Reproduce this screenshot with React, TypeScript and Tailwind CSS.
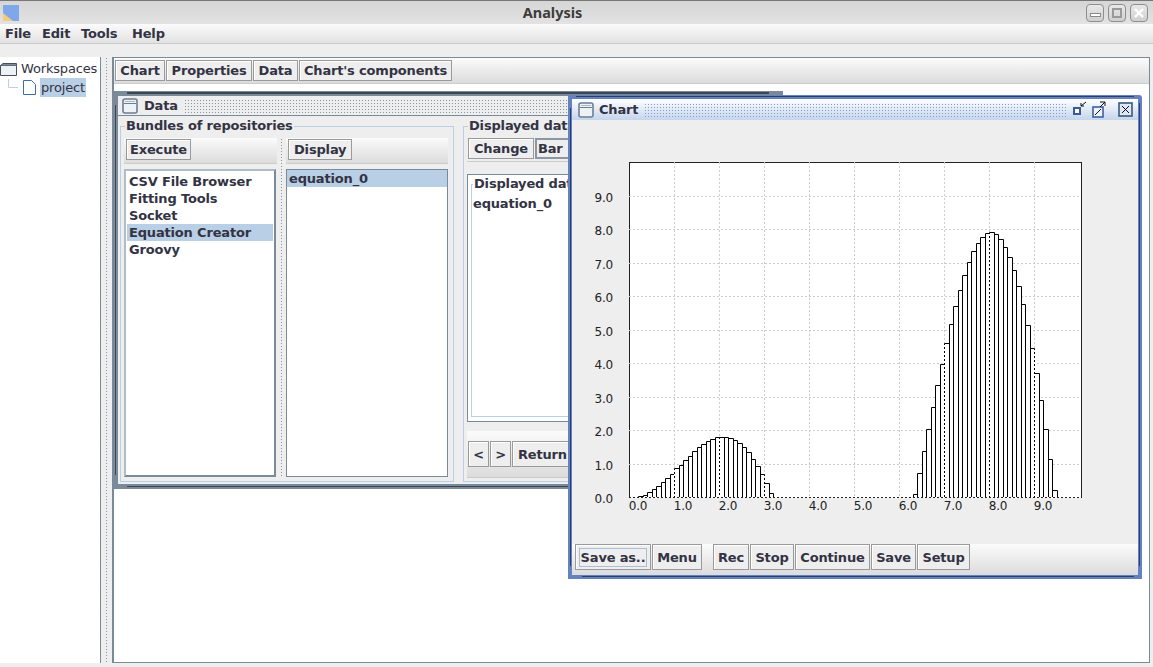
const LABEL = "font-['DejaVu_Sans',sans-serif] tracking-[-0.17px]";

const dots = "bg-[radial-gradient(circle,#8794a3_0.8px,transparent_1px)] bg-[length:3px_3px]";
const blueDots = "bg-[radial-gradient(circle,#7f9bd6_0.8px,transparent_1px)] bg-[length:3px_3px]";

// bar tops read off the picture, in px above the axis
const HUMP_A = [0, 0, 1, 2, 5, 8, 11, 15, 19, 23, 29, 32, 37, 41, 46, 50, 53, 56, 58, 60, 60, 60, 59, 57, 54, 50, 45, 38, 31, 23, 14, 4];
const HUMP_B = [3, 24, 46, 68, 90, 112, 133, 154, 173, 191, 207, 222, 235, 246, 254, 260, 264, 265, 263, 258, 250, 240, 227, 211, 193, 172, 149, 124, 97, 68, 38, 7];

const MENUS = [
  { label: "File", width: "w-[37px]" },
  { label: "Edit", width: "w-[39px]" },
  { label: "Tools", width: "w-[51px]" },
  { label: "Help", width: "w-[40px]" },
];

function Btn({ children, className = "" }: { children: React.ReactNode; className?: string }) {
  return (
    <button className={`h-[21px] px-[5px] border border-[#9a9a9a] shadow-[inset_1px_1px_0_#fff] bg-[#eeeeee] text-[13px] font-bold text-[#333344] leading-none whitespace-nowrap shrink-0 ${LABEL} ${className}`}>
      {children}
    </button>
  );
}

function WindowIcon() {
  return (
    <svg width="16" height="16" viewBox="0 0 16 16" className="shrink-0">
      <rect x="1" y="1" width="14" height="14" rx="2" fill="#eef2f7" stroke="#6b7f93" strokeWidth="1.6" />
      <path d="M2 5.5h12" stroke="#6b7f93" />
      <path d="M3.5 3.5h9" stroke="#6b7f93" strokeDasharray="1 1" />
    </svg>
  );
}

function Toolbar({ children, className = "" }: { children: React.ReactNode; className?: string }) {
  return (
    <div className={`flex bg-gradient-to-b from-[#fbfbfb] to-[#dcdcdc] border-b border-[#cccccc] ${className}`}>
      {children}
    </div>
  );
}

function Splitter({ className = "" }: { className?: string }) {
  return (
    <div className={`flex justify-center shrink-0 ${className}`}>
      <div className={`w-[3px] h-full ${dots}`} />
    </div>
  );
}

function Chart() {
  const W = 452;
  const H = 335;
  const xs = [0, 45, 90, 135, 180, 225, 270, 315, 360, 405];
  const ys = [1, 2, 3, 4, 5, 6, 7, 8, 9].map((v) => H - v * 33.45);
  const px = (k: number) => Math.round(k * 4.5);
  const bars = (list: number[], start: number) =>
    list
      .map((h, i) => `M${px(start + i) + 0.5} ${H}V${H - h + 0.5}H${px(start + i + 1) + 0.5}V${H}`)
      .join("");
  // the grid shows through the bar edges it shares a column with
  const height = (x: number) => {
    const k = Math.round(x / 4.5);
    const at = (n: number) => (n < 32 ? HUMP_A[n] ?? 0 : n >= 63 ? HUMP_B[n - 63] ?? 0 : 0);
    return Math.max(at(k - 1), at(k));
  };
  return (
    <svg width="520" height="360" viewBox="-55 -5 520 360" className="block">
      <rect x="0.5" y="0.5" width={W} height={H} fill="#fff" stroke="#222" />
      {xs.slice(1).map((x) => (
        <path key={x} d={`M${x + 0.5} 0V${H}`} stroke="#cccccc" strokeDasharray="2 2" />
      ))}
      {ys.map((y) => (
        <path key={y} d={`M0 ${Math.round(y) + 0.5}H${W}`} stroke="#cccccc" strokeDasharray="2 2" />
      ))}
      <path d={bars(HUMP_A, 0) + bars(HUMP_B, 63)} fill="#fff" stroke="#000" />
      {xs.slice(1).map((x) => (
        <path key={x} d={`M${x + 0.5} ${H - height(x)}V${H}`} stroke="#fff" strokeDasharray="2 2" strokeDashoffset="2" />
      ))}
      <path d={`M0 ${H + 0.5}H${W}`} stroke="#fff" />
      <path d={`M0 ${H + 0.5}H${W}`} stroke="#222" strokeDasharray="2 2" />
      {xs.map((x, i) => (
        <text key={x} x={x + 9} y={H + 13} fontSize="12" textAnchor="middle" fill="#222" fontFamily="DejaVu Sans">
          {i}.0
        </text>
      ))}
      {[0, 1, 2, 3, 4, 5, 6, 7, 8, 9].map((v) => (
        <text key={v} x={-16} y={H - v * 33.45 + 6} fontSize="12" textAnchor="end" fill="#222" fontFamily="DejaVu Sans">
          {v}.0
        </text>
      ))}
    </svg>
  );
}

function DataWindow() {
  return (
    <div className="absolute -left-[1px] top-[7px] w-[670px] h-[398px] border-[5px] border-[#7a8a99] bg-[#eeeeee] flex flex-col">
      <div className="absolute left-[9px] right-[9px] -top-[4px] h-[2px] bg-[#3d4650]" />
      <div className="absolute left-[9px] right-[9px] -bottom-[3px] h-[1px] bg-[#3d4650]" />
      <div className="absolute -left-[3px] top-[9px] bottom-[9px] w-[1px] bg-[#3d4650]" />
      <div className="h-[20px] flex items-center pl-[4px] shrink-0 border-b border-[#7a8a99]">
        <WindowIcon />
        <span className={`ml-[6px] text-[13px] font-bold text-[#333344] ${LABEL}`}>Data</span>
        <div className={`flex-1 h-[14px] ml-[6px] mr-2 ${dots}`} />
      </div>
      <div className="flex-1 flex gap-[9px] pl-[2px] pt-[3px] pb-[2px] min-h-0">
        <fieldset className="w-[334px] shrink-0 border border-[#b8cfe5] pl-[3px] pt-[5px] pb-[4px] flex min-h-0">
          <legend className={`ml-[1px] px-[1px] text-[13px] font-bold leading-[14px] text-[#333344] ${LABEL}`}>Bundles of repositories</legend>
          <div className="w-[153px] shrink-0 flex flex-col gap-[5px]">
            <Toolbar className="h-[26px] pl-[2px] pt-[1px] items-start shrink-0"><Btn className="w-[65px] !px-0">Execute</Btn></Toolbar>
            <div className="flex-1 w-[152px] border-2 border-[#7a8a99] border-t-[#b0bcc8] border-l-[#b0bcc8] bg-white py-[2px]">
              {["CSV File Browser", "Fitting Tools", "Socket", "Equation Creator", "Groovy"].map((t) => (
                <div key={t} className={`h-[17px] mx-[1px] px-[2px] text-[13px] font-bold leading-[17px] text-[#333344] ${t === "Equation Creator" ? "bg-[#b8cfe5]" : ""} ${LABEL}`}>{t}</div>
              ))}
            </div>
          </div>
          <Splitter className="w-[9px]" />
          <div className="w-[162px] shrink-0 flex flex-col gap-[5px]">
            <Toolbar className="h-[26px] pl-[2px] pt-[1px] items-start shrink-0"><Btn>Display</Btn></Toolbar>
            <div className="flex-1 border border-[#7a8a99] bg-white">
              <div className={`h-[17px] text-[13px] font-bold leading-[17px] pl-[2px] bg-[#b8cfe5] text-[#333344] ${LABEL}`}>equation_0</div>
            </div>
          </div>
        </fieldset>
        <fieldset className="flex-1 min-w-0 border border-[#b8cfe5] pl-[3px] pt-[5px] pb-[3px] flex flex-col min-h-0">
          <legend className={`ml-[1px] px-[1px] text-[13px] font-bold leading-[14px] text-[#333344] ${LABEL}`}>Displayed data</legend>
          <div className="h-[24px] pl-[1px] flex items-start gap-[1px] border-b border-[#cccccc] shrink-0">
            <Btn>Change</Btn>
            <div className={`h-[21px] w-[100px] px-[1px] border-2 border-[#8a98a6] bg-[#eeeeee] text-[13px] font-bold leading-[17px] text-[#333344] ${LABEL}`}>Bar</div>
          </div>
          <div className="mt-[12px] h-[248px] border border-[#7a8a99] bg-white px-[3px] pt-[2px] shrink-0">
            <fieldset className="h-[240px] border border-[#b8cfe5] pl-[1px] pt-[4px]">
              <legend className={`px-[1px] text-[13px] font-bold leading-[14px] text-[#333344] ${LABEL}`}>Displayed data</legend>
              <div className={`text-[13px] font-bold leading-[17px] text-[#333344] ${LABEL}`}>equation_0</div>
            </fieldset>
          </div>
          <Toolbar className="mt-[9px] h-[47px] gap-[1px] pl-[1px] pt-[10px] items-start shrink-0">
            <Btn className="w-[21px] !px-0 !h-[26px]">&lt;</Btn>
            <Btn className="w-[21px] !px-0 !h-[26px]">&gt;</Btn>
            <Btn className="!h-[26px]">Return</Btn>
          </Toolbar>
        </fieldset>
      </div>
    </div>
  );
}

function ChartWindow() {
  return (
    <div className="absolute left-[454px] top-[11px] w-[574px] h-[484px] border-[4px] border-[#6382bf] rounded-tr-[3px] bg-[#eeeeee] flex flex-col">
      <div className="absolute left-[4px] right-[4px] -top-[3px] h-[1px] bg-[#2c3f6b]" />
      <div className="absolute left-[10px] right-[4px] -bottom-[2px] h-[1px] bg-[#2c3f6b]" />
      <div className="absolute -left-[2px] top-[9px] bottom-[9px] w-[1px] bg-[#2c3f6b]" />
      <div className="absolute -right-[2px] top-[4px] bottom-[9px] w-[1px] bg-[#2c3f6b]" />
      <div className="h-[21px] shrink-0 flex items-center pl-[6px] pr-[5px] bg-gradient-to-b from-[#ffffff] to-[#c4d5ec]">
        <WindowIcon />
        <span className={`ml-[5px] text-[13px] font-bold text-[#333344] ${LABEL}`}>Chart</span>
        <div className={`flex-1 h-[14px] ml-[6px] mr-[6px] ${blueDots}`} />
        <svg width="60" height="20" viewBox="0 0 60 20" className="shrink-0">
          <rect x="1" y="8" width="6" height="6" fill="#fff" stroke="#3a5a9c" strokeWidth="2" />
          <path d="M13 2L8 6M8 3v3h3" fill="none" stroke="#111" />
          <rect x="20" y="7" width="10" height="10" fill="#eef2f7" stroke="#3f5f9f" strokeWidth="1.6" />
          <path d="M22 15l6-6M27 2h5v4M32 2l-5 5" fill="none" stroke="#111" />
          <rect x="46" y="3" width="13" height="13" fill="#dfe7f3" stroke="#3a5a7c" strokeWidth="1.6" />
          <path d="M49 6l7 7M56 6l-7 7" stroke="#111" />
        </svg>
      </div>
      <div className="flex-1 min-h-0 pl-[2px] pt-[37px]">
        <Chart />
      </div>
      <Toolbar className="h-[31px] shrink-0 pl-[3px] gap-[1px] items-start border-b-0">
        <Btn className="!h-[26px] w-[76px] !px-0">
          <span className="border border-[#a9bdd6] px-[1px] py-[1px]">Save as..</span>
        </Btn>
        <Btn className="!h-[26px] w-[50px] !px-0">Menu</Btn>
        <Btn className="!h-[26px] w-[36px] !px-0 ml-[10px]">Rec</Btn>
        <Btn className="!h-[26px] w-[44px] !px-0">Stop</Btn>
        <Btn className="!h-[26px] w-[75px] !px-0">Continue</Btn>
        <Btn className="!h-[26px] w-[45px] !px-0">Save</Btn>
        <Btn className="!h-[26px] w-[53px] !px-0">Setup</Btn>
      </Toolbar>
    </div>
  );
}

function WmButton({ children }: { children: React.ReactNode }) {
  return (
    <div className="w-[18px] h-[18px] rounded-[4px] border border-[#8e8e8e] bg-gradient-to-b from-[#e8e8e8] to-[#cfcfcf] flex items-center justify-center">
      {children}
    </div>
  );
}

export default function App() {
  return (
    <div className={`w-[1153px] h-[667px] overflow-hidden flex flex-col bg-[#eeeeee] ${LABEL}`}>
      <div className="h-[24px] shrink-0 flex items-center border-t border-[#777777] bg-gradient-to-b from-[#d6d6d6] to-[#e2e2e2] pl-[3px] pr-[5px]">
        <svg width="16" height="16" viewBox="0 0 16 16" className="shrink-0">
          <rect width="16" height="16" fill="#7fa8ea" />
          <path d="M0 8L10 16H0Z" fill="#f3cd7a" />
        </svg>
        <div className="flex-1 text-center text-[14.5px] font-bold tracking-normal text-[#3c3c3c] font-['Noto_Sans',sans-serif]">Analysis</div>
        <div className="flex gap-[4px]">
          <WmButton><span className="mt-[5px] w-[9px] h-[2px] bg-white border border-[#888] box-content" /></WmButton>
          <WmButton>
            <span className="w-[10px] h-[10px] border-2 border-[#999] flex items-center justify-center" />
          </WmButton>
          <WmButton>
            <svg width="10" height="10" viewBox="0 0 10 10"><path d="M1 1l8 8M9 1l-8 8" stroke="#fff" strokeWidth="2.4" /></svg>
          </WmButton>
        </div>
      </div>

      <div className="h-[20px] shrink-0 flex items-center pl-[5px] bg-gradient-to-b from-[#fbfbfb] to-[#e2e2e2] border-b border-[#cccccc]">
        {MENUS.map((m) => (
          <span key={m.label} className={`text-[13px] font-bold text-[#333344] ${m.width}`}>{m.label}</span>
        ))}
      </div>

      <div className="flex-1 min-h-0 flex pt-[13px] pb-[4px]">
        <div className="w-[101px] shrink-0 bg-white border-r border-[#7a8a99] pt-[2px]">
          <div className="flex items-center gap-[3px] h-[19px]">
            <svg width="18" height="14" viewBox="0 0 18 14" className="shrink-0">
              <path d="M.5 3.5h16v10H.5z" fill="#eef2f7" stroke="#44505c" />
              <path d="M.5 3.5L3 1.5h13.5v2" fill="#7a8a99" stroke="#44505c" />
            </svg>
            <span className="text-[13px] text-[#333344]">Workspaces</span>
          </div>
          <div className="flex items-center h-[19px] pl-[8px]">
            <svg width="32" height="17" viewBox="0 0 32 17" className="shrink-0">
              <path d="M.5 0v8.5H10" fill="none" stroke="#b8cfe5" />
              <path d="M15.5 1.5h8l4 4v10h-12z" fill="#fff" stroke="#3a6ea5" />
            </svg>
            <span className="h-[19px] px-[1px] bg-[#b8cfe5] text-[13px] leading-[19px] text-[#333344]">project</span>
          </div>
        </div>
        <Splitter className="w-[11px]" />
        <div className="flex-1 min-w-0 border-l-2 border-t border-b border-r border-[#7a8a99] bg-white flex flex-col mr-[3px]">
          <Toolbar className="h-[26px] shrink-0 pl-[1px] pt-[2px] gap-[1px] items-start">
            <Btn className="w-[50px] !px-0">Chart</Btn>
            <Btn className="w-[86px] !px-0">Properties</Btn>
            <Btn className="w-[45px] !px-0">Data</Btn>
            <Btn className="w-[153px] !px-0">Chart's components</Btn>
          </Toolbar>
          <div className="relative flex-1 min-h-0">
            <DataWindow />
            <ChartWindow />
          </div>
        </div>
      </div>
    </div>
  );
}
